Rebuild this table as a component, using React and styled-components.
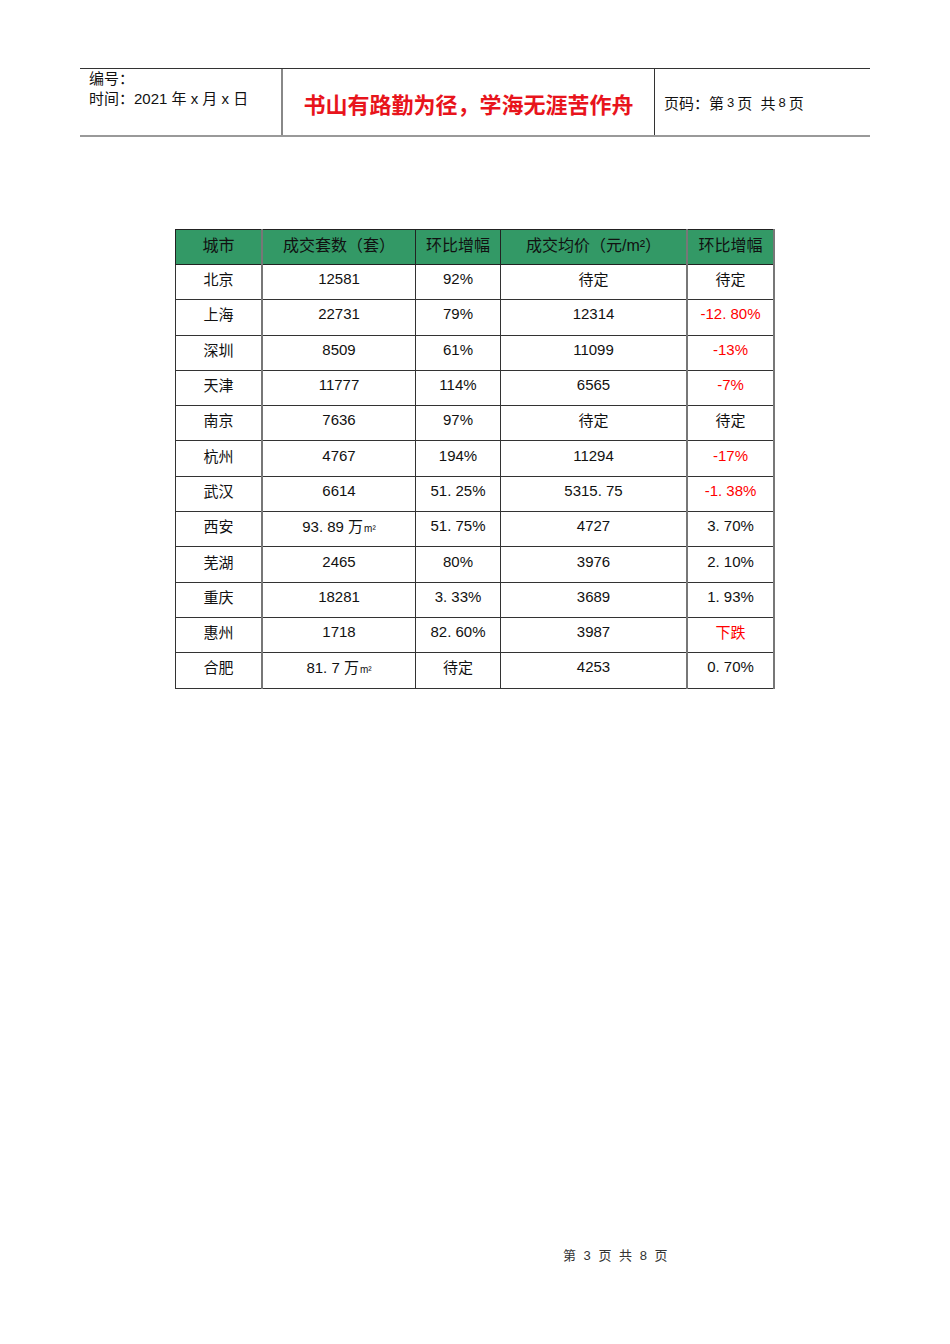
import React from "react";
import styled, { createGlobalStyle } from "styled-components";

const Global = createGlobalStyle`
  body {
    margin: 0;
    background: #fff;
    font-family: "Liberation Sans", "Noto Sans CJK SC", sans-serif;
    color: #111;
  }
`;

/* Page */
const Page = styled.div`
  width: 950px;
  height: 1344px;
  display: flex;
  flex-direction: column;
  align-items: flex-start;
`;

/* Header band */
const Header = styled.div`
  margin: 68px 0 0 80px;
  width: 790px;
  height: 66px;
  display: flex;
  border-top: 1px solid #333;
  border-bottom: 2px solid #999;
`;

const MetaCell = styled.div`
  width: 192px;
  padding: 0 0 0 9px;
  font-size: 15px;
  line-height: 20px;
  border-right: 2px solid #888;
`;

const MottoCell = styled.div`
  width: 371px;
  display: flex;
  align-items: center;
  justify-content: center;
  padding-top: 2px;
  color: #e8141c;
  font-size: 22px;
  font-weight: bold;
  font-family: "Noto Sans CJK SC", sans-serif;
  border-right: 1px solid #333;
`;

const PageCell = styled.div`
  flex: 1;
  display: flex;
  align-items: center;
  padding: 0 0 0 9px;
  font-size: 15px;
`;

const Small = styled.span`
  font-size: 13px;
  margin: 0 3px;
`;

/* Table */
const Table = styled.table`
  margin: 92px 0 0 175px;
  border-collapse: collapse;
  table-layout: fixed;
  width: 591px;
  font-size: 15px;
  border: 1px solid #333;
`;

const Th = styled.th`
  background: #339966;
  font-weight: normal;
  font-size: 16px;
  height: 27px;
  padding: 0 0 7px;
  text-align: center;
  border: 1px solid #222;
  border-right: ${(p) => (p.grey ? "2px solid #777" : "1px solid #222")};
  width: ${(p) => p.w}px;
`;

const Td = styled.td`
  height: 27.3px;
  padding: 0 0 7px;
  text-align: center;
  border: 1px solid #333;
  border-right: ${(p) => (p.grey ? "2px solid #777" : "1px solid #333")};
  color: ${(p) => (p.red ? "#ff0000" : "#111")};
`;

const Sup = styled.span`
  font-size: 10px;
  margin-left: 1px;
`;

/* Footer */
const Footer = styled.div`
  margin: auto 0 80px 563px;
  font-size: 13px;
  color: #333;
  word-spacing: 4px;
`;

const cols = [
  { label: "城市", w: 85, grey: true },
  { label: "成交套数（套）", w: 152 },
  { label: "环比增幅", w: 84 },
  { label: "成交均价（元/m²）", w: 185, grey: true },
  { label: "环比增幅", w: 85, grey: true },
];

const area = (n) => (
  <>
    {n} 万<Sup>m²</Sup>
  </>
);

const rows = [
  ["北京", "12581", "92%", "待定", "待定", false],
  ["上海", "22731", "79%", "12314", "-12. 80%", true],
  ["深圳", "8509", "61%", "11099", "-13%", true],
  ["天津", "11777", "114%", "6565", "-7%", true],
  ["南京", "7636", "97%", "待定", "待定", false],
  ["杭州", "4767", "194%", "11294", "-17%", true],
  ["武汉", "6614", "51. 25%", "5315. 75", "-1. 38%", true],
  ["西安", area("93. 89"), "51. 75%", "4727", "3. 70%", false],
  ["芜湖", "2465", "80%", "3976", "2. 10%", false],
  ["重庆", "18281", "3. 33%", "3689", "1. 93%", false],
  ["惠州", "1718", "82. 60%", "3987", "下跌", true],
  ["合肥", area("81. 7"), "待定", "4253", "0. 70%", false],
];

export default function App() {
  return (
    <Page>
      <Global />
      <Header>
        <MetaCell>
          <div>编号：</div>
          <div>时间：2021 年 x 月 x 日</div>
        </MetaCell>
        <MottoCell>书山有路勤为径，学海无涯苦作舟</MottoCell>
        <PageCell>
          页码：第<Small>3</Small>页&nbsp;&nbsp;共<Small>8</Small>页
        </PageCell>
      </Header>

      <Table>
        <thead>
          <tr>
            {cols.map((c, i) => (
              <Th key={i} w={c.w} grey={c.grey}>
                {c.label}
              </Th>
            ))}
          </tr>
        </thead>
        <tbody>
          {rows.map((r, i) => (
            <tr key={i}>
              <Td grey>{r[0]}</Td>
              <Td>{r[1]}</Td>
              <Td>{r[2]}</Td>
              <Td grey>{r[3]}</Td>
              <Td grey red={r[5]}>{r[4]}</Td>
            </tr>
          ))}
        </tbody>
      </Table>

      <Footer>第 3 页 共 8 页</Footer>
    </Page>
  );
}
